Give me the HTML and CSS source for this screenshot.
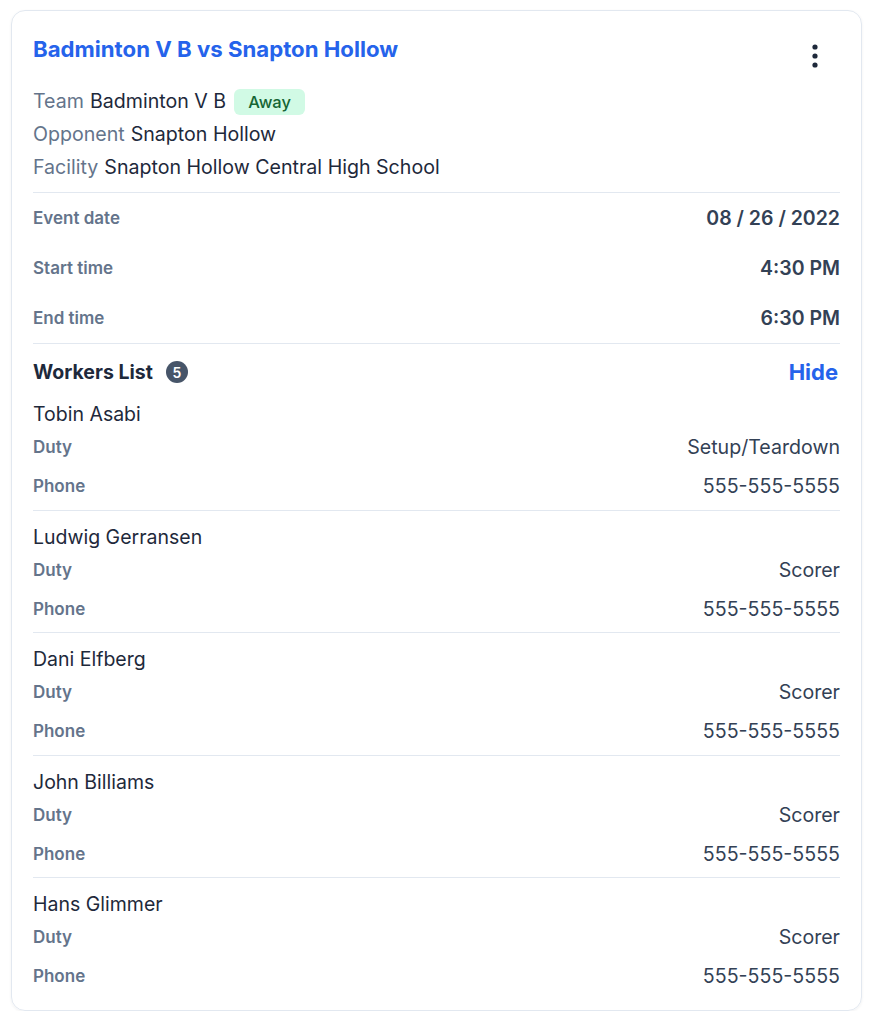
FILE: index.html
```html
<!DOCTYPE html>
<html lang="en">
<head>
    <meta charset="UTF-8">
    <meta name="viewport" content="width=device-width, initial-scale=1.0">
    <title>Badminton V B vs Snapton Hollow</title>
    <link rel="stylesheet" href="styles.css">
</head>
<body>
    <div class="card">
        <div class="card-head">
            <div class="title">Badminton V B vs Snapton Hollow</div>
            <button class="menu-btn" aria-label="More">
                <svg width="20" height="24" viewBox="0 0 20 24">
                    <circle cx="10" cy="3" r="2.6" fill="#1e293b"/>
                    <circle cx="10" cy="12" r="2.6" fill="#1e293b"/>
                    <circle cx="10" cy="21" r="2.6" fill="#1e293b"/>
                </svg>
            </button>
        </div>

        <div class="info">
            <div class="info-row"><span class="info-label">Team</span> Badminton V B <span class="tag">Away</span></div>
            <div class="info-row"><span class="info-label">Opponent</span> Snapton Hollow</div>
            <div class="info-row"><span class="info-label">Facility</span> Snapton Hollow Central High School</div>
        </div>

        <div class="times">
            <div class="time-row"><span class="time-label">Event date</span><span class="time-value">08 / 26 / 2022</span></div>
            <div class="time-row"><span class="time-label">Start time</span><span class="time-value">4:30 PM</span></div>
            <div class="time-row"><span class="time-label">End time</span><span class="time-value">6:30 PM</span></div>
        </div>

        <div class="workers">
            <div class="workers-head">
                <div class="workers-title">Workers List <span class="count">5</span></div>
                <a class="hide-link" href="#">Hide</a>
            </div>

            <div class="worker">
                <div class="worker-name">Tobin Asabi</div>
                <div class="worker-row duty"><span class="worker-label">Duty</span><span class="worker-value">Setup/Teardown</span></div>
                <div class="worker-row phone"><span class="worker-label">Phone</span><span class="worker-value">555-555-5555</span></div>
            </div>
            <div class="worker">
                <div class="worker-name">Ludwig Gerransen</div>
                <div class="worker-row duty"><span class="worker-label">Duty</span><span class="worker-value">Scorer</span></div>
                <div class="worker-row phone"><span class="worker-label">Phone</span><span class="worker-value">555-555-5555</span></div>
            </div>
            <div class="worker">
                <div class="worker-name">Dani Elfberg</div>
                <div class="worker-row duty"><span class="worker-label">Duty</span><span class="worker-value">Scorer</span></div>
                <div class="worker-row phone"><span class="worker-label">Phone</span><span class="worker-value">555-555-5555</span></div>
            </div>
            <div class="worker">
                <div class="worker-name">John Billiams</div>
                <div class="worker-row duty"><span class="worker-label">Duty</span><span class="worker-value">Scorer</span></div>
                <div class="worker-row phone"><span class="worker-label">Phone</span><span class="worker-value">555-555-5555</span></div>
            </div>
            <div class="worker">
                <div class="worker-name">Hans Glimmer</div>
                <div class="worker-row duty"><span class="worker-label">Duty</span><span class="worker-value">Scorer</span></div>
                <div class="worker-row phone"><span class="worker-label">Phone</span><span class="worker-value">555-555-5555</span></div>
            </div>
        </div>
    </div>
</body>
</html>
```

FILE: styles.css
```css
html, body {
    margin: 0;
    padding: 0;
    font-family: Inter, "Noto Sans", sans-serif;
    background: #ffffff;
    color: #1e293b;
}
*, *::before, *::after {
    box-sizing: border-box;
}
.card {
    width: 851px;
    margin: 10px 0 0 11px;
    padding: 24px 21px 10px 21px;
    border: 1px solid #e2e8f0;
    border-radius: 14px;
    box-shadow: 0 1px 3px rgba(15, 23, 42, 0.06);
}
.card-head {
    display: flex;
    justify-content: space-between;
    align-items: flex-start;
}
.title {
    font-size: 22.2px;
    font-weight: 700;
    line-height: 28px;
    color: #2563eb;
}
.menu-btn {
    width: 40px;
    height: 40px;
    margin: 1px 5px 0 0;
    padding: 0;
    border: none;
    background: none;
    display: flex;
    align-items: center;
    justify-content: center;
}
.info {
    margin-top: 9px;
    padding-bottom: 8px;
    border-bottom: 1px solid #e2e8f0;
}
.info-row {
    display: flex;
    align-items: center;
    gap: 6px;
    font-size: 19.6px;
    line-height: 33px;
    height: 33px;
    color: #1e293b;
}
.info-label {
    color: #64748b;
}
.tag {
    margin-left: 2px;
    padding: 0 14px;
    height: 26px;
    line-height: 26px;
    border-radius: 6px;
    background: #d1fae5;
    color: #166534;
    font-size: 16.5px;
    font-weight: 500;
}
.times {
    border-bottom: 1px solid #e2e8f0;
}
.time-row {
    display: flex;
    justify-content: space-between;
    align-items: center;
    height: 50px;
}
.time-label {
    font-size: 17px;
    font-weight: 600;
    color: #64748b;
}
.time-value {
    font-size: 19.5px;
    font-weight: 600;
    color: #334155;
}
.workers-head {
    display: flex;
    justify-content: space-between;
    align-items: center;
    height: 32px;
    margin-top: 12px;
}
.workers-title {
    display: flex;
    align-items: center;
    font-size: 19.5px;
    font-weight: 700;
    color: #1e293b;
}
.count {
    display: inline-flex;
    align-items: center;
    justify-content: center;
    width: 22px;
    height: 22px;
    margin-left: 13px;
    border-radius: 50%;
    background: #475569;
    color: #ffffff;
    font-size: 14px;
    font-weight: 600;
}
.hide-link {
    font-size: 22px;
    font-weight: 700;
    color: #2563eb;
    text-decoration: none;
    margin-right: 2px;
}
.worker {
    padding: 13px 0 4.5px 0;
    border-bottom: 1px solid #e2e8f0;
}
.worker:last-child {
    border-bottom: none;
}
.worker-name {
    font-size: 19.5px;
    line-height: 26px;
    color: #1e293b;
}
.worker-row {
    display: flex;
    justify-content: space-between;
    align-items: center;
}
.worker-row.duty {
    height: 40px;
}
.worker-row.phone {
    height: 38px;
}
.worker-label {
    font-size: 17px;
    font-weight: 600;
    color: #64748b;
}
.worker-value {
    font-size: 19.6px;
    color: #334155;
}
```
